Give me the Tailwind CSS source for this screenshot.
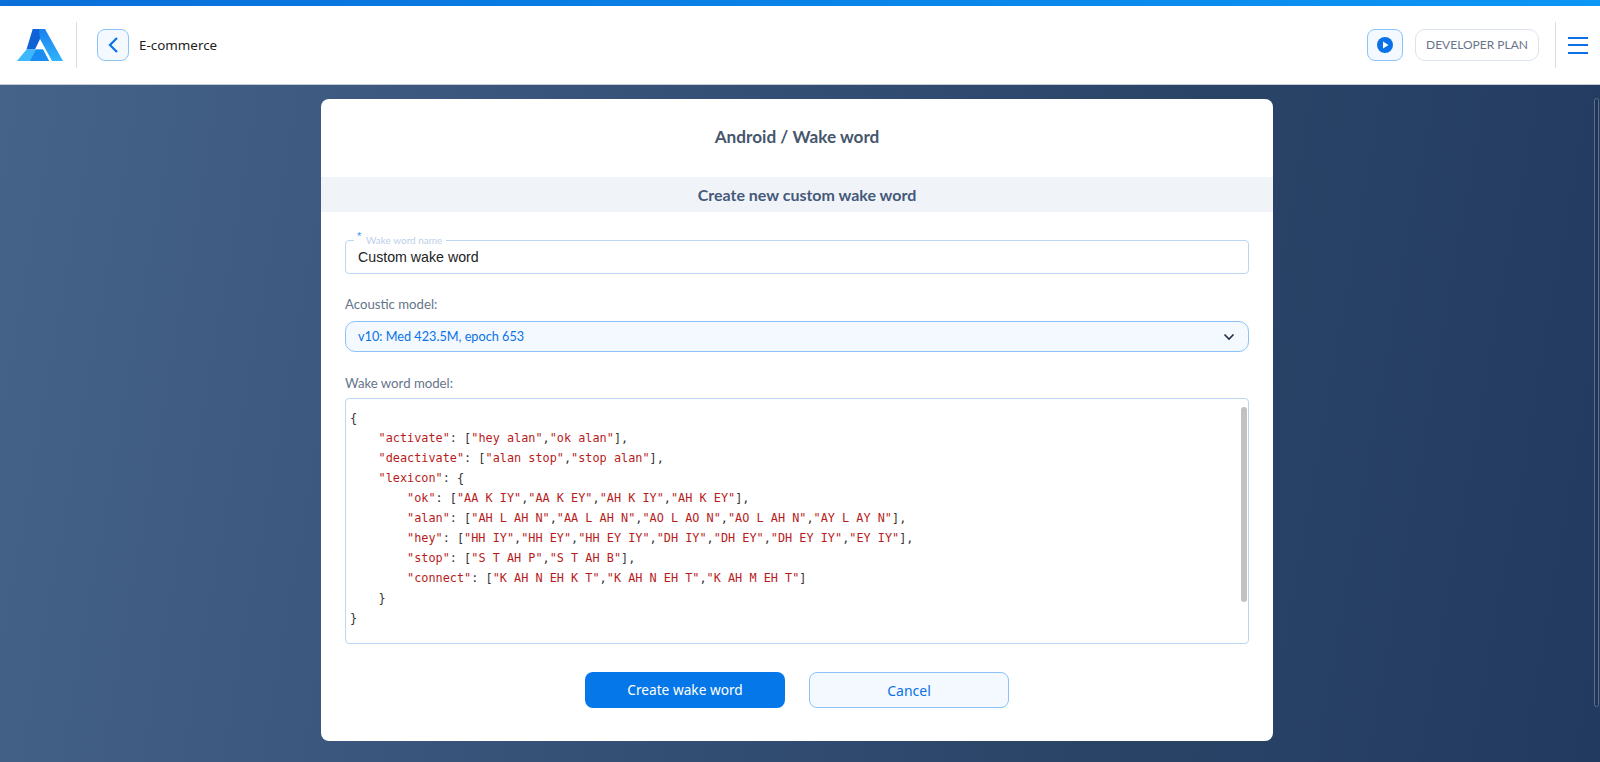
<!DOCTYPE html>
<html lang="en">
  <head>
    <meta charset="UTF-8" />
    <meta name="viewport" content="width=device-width, initial-scale=1.0" />
    <title>Android / Wake word</title>
    <script src="https://cdn.jsdelivr.net/npm/@tailwindcss/browser@4"></script>
  </head>
  <body class="h-[762px] overflow-hidden flex flex-col bg-[#2f4a72] font-['Lato',sans-serif]">
    <!-- Top bar -->
    <div class="h-[6px] bg-gradient-to-r from-[#0a6fd8] to-[#0c96f5]"></div>
    <header class="h-[79px] bg-white flex items-center justify-between border-b border-[#c5ccd6]">
      <div class="flex items-center">
        <div class="w-[77px] h-[46px] border-r border-[#d9dfe7] flex items-center pl-[17px]">
          <svg width="46" height="32" viewBox="0 0 46 32">
            <defs>
              <linearGradient id="a" x1="0" y1="0" x2="0" y2="1">
                <stop offset="0" stop-color="#1a7ff0" />
                <stop offset="1" stop-color="#2fb4fb" />
              </linearGradient>
            </defs>
            <path d="M15.7 0H28L46 32H35L23 10Z" fill="url(#a)" />
            <path d="M15.7 0H22L23 10 18 20.5H9.5Z" fill="#0f62d6" />
            <path d="M9.5 20.5H26L32 32H0Z" fill="#3db8fc" />
            <path d="M19 20.5H26L32 32H13Z" fill="#1a8df2" />
          </svg>
        </div>
        <button class="ml-[20px] w-[32px] h-[32px] rounded-[8px] border border-[#8cc4fa] bg-[#f4f9ff] flex items-center justify-center">
          <svg width="12" height="18" viewBox="0 0 12 18" fill="none" stroke="#0a72e6" stroke-width="2.2">
            <path d="M10 2 3 9l7 7" />
          </svg>
        </button>
        <span class="ml-[10px] text-[13.4px] text-[#222] font-['Noto_Sans',sans-serif]">E-commerce</span>
      </div>
      <div class="flex items-center">
        <button class="w-[36px] h-[32px] rounded-[8px] border border-[#8cc4fa] bg-[#f4f9ff] flex items-center justify-center">
          <svg width="16" height="16" viewBox="0 0 16 16">
            <circle cx="8" cy="8" r="8" fill="#0a72e6" />
            <path d="M6 4.5v7L11.5 8Z" fill="#fff" />
          </svg>
        </button>
        <div class="ml-[12px] w-[124px] h-[32px] rounded-[10px] border border-[#dde3ec] flex items-center justify-center text-[12px] text-[#68758a]">DEVELOPER PLAN</div>
        <div class="ml-[16px] w-[1px] h-[46px] bg-[#d9dfe7]"></div>
        <div class="ml-[12px] mr-[12px] w-[20px] flex flex-col gap-[5.5px]">
          <span class="h-[2px] bg-[#0a72e6]"></span>
          <span class="h-[2px] bg-[#0a72e6]"></span>
          <span class="h-[2px] bg-[#0a72e6]"></span>
        </div>
      </div>
    </header>

    <!-- Main -->
    <main class="relative flex-1 bg-[linear-gradient(100deg,#456289,#2a4468_70%,#233a60)] flex justify-center pr-[6px] pt-[14px]">
      <div class="w-[952px] h-[642px] bg-white rounded-[8px] flex flex-col">
        <h1 class="h-[76px] mb-[2px] flex items-center justify-center text-[17.2px] font-bold text-[#46566c]">Android / Wake word</h1>
        <h2 class="h-[35px] pl-[20px] bg-[#f0f4f9] flex items-center justify-center text-[16px] font-bold text-[#45597a]">Create new custom wake word</h2>

        <div class="px-[24px] flex flex-col">
          <!-- Name field -->
          <div class="relative mt-[28px] h-[34px] border border-[#bcd6f3] rounded-[4px] flex items-center px-[12px] pt-[1px] text-[14.2px] text-[#222] font-['Liberation_Sans',sans-serif]">
            Custom wake word
            <span class="absolute left-[8px] top-[-7px] bg-white pl-[12px] pr-[4px] text-[10px] leading-[12px] text-[#bdd0ea] font-['Lato',sans-serif]">Wake word name</span>
            <span class="absolute left-[11px] top-[-11px] text-[11px] leading-[12px] text-[#2e97f5]">*</span>
          </div>

          <label class="mt-[22px] text-[13.2px] leading-[16px] text-[#66758a]">Acoustic model:</label>
          <div class="mt-[9px] h-[31px] rounded-[10px] border border-[#8cc4fa] bg-[#f4f9ff] flex items-center justify-between pl-[12px] pr-[13px] text-[12.7px] text-[#0a72e6]">
            <span>v10: Med 423.5M, epoch 653</span>
            <svg width="12" height="8" viewBox="0 0 12 8" fill="none" stroke="#1f2d3d" stroke-width="1.6">
              <path d="M1.5 1.5 6 6l4.5-4.5" />
            </svg>
          </div>

          <label class="mt-[23px] text-[13.2px] leading-[16px] text-[#66758a]">Wake word model:</label>
          <div class="relative mt-[7px] h-[246px] rounded-[4px] border border-[#bcd6f3] pl-[4px] pt-[9px] font-['DejaVu_Sans_Mono',monospace] text-[11.85px] leading-[20px] text-[#333]">
            <div class="whitespace-pre">{</div>
            <div class="whitespace-pre">    <span class="text-[#b71c1c]">"activate"</span>: [<span class="text-[#b71c1c]">"hey alan"</span>,<span class="text-[#b71c1c]">"ok alan"</span>],</div>
            <div class="whitespace-pre">    <span class="text-[#b71c1c]">"deactivate"</span>: [<span class="text-[#b71c1c]">"alan stop"</span>,<span class="text-[#b71c1c]">"stop alan"</span>],</div>
            <div class="whitespace-pre">    <span class="text-[#b71c1c]">"lexicon"</span>: {</div>
            <div class="whitespace-pre">        <span class="text-[#b71c1c]">"ok"</span>: [<span class="text-[#b71c1c]">"AA K IY"</span>,<span class="text-[#b71c1c]">"AA K EY"</span>,<span class="text-[#b71c1c]">"AH K IY"</span>,<span class="text-[#b71c1c]">"AH K EY"</span>],</div>
            <div class="whitespace-pre">        <span class="text-[#b71c1c]">"alan"</span>: [<span class="text-[#b71c1c]">"AH L AH N"</span>,<span class="text-[#b71c1c]">"AA L AH N"</span>,<span class="text-[#b71c1c]">"AO L AO N"</span>,<span class="text-[#b71c1c]">"AO L AH N"</span>,<span class="text-[#b71c1c]">"AY L AY N"</span>],</div>
            <div class="whitespace-pre">        <span class="text-[#b71c1c]">"hey"</span>: [<span class="text-[#b71c1c]">"HH IY"</span>,<span class="text-[#b71c1c]">"HH EY"</span>,<span class="text-[#b71c1c]">"HH EY IY"</span>,<span class="text-[#b71c1c]">"DH IY"</span>,<span class="text-[#b71c1c]">"DH EY"</span>,<span class="text-[#b71c1c]">"DH EY IY"</span>,<span class="text-[#b71c1c]">"EY IY"</span>],</div>
            <div class="whitespace-pre">        <span class="text-[#b71c1c]">"stop"</span>: [<span class="text-[#b71c1c]">"S T AH P"</span>,<span class="text-[#b71c1c]">"S T AH B"</span>],</div>
            <div class="whitespace-pre">        <span class="text-[#b71c1c]">"connect"</span>: [<span class="text-[#b71c1c]">"K AH N EH K T"</span>,<span class="text-[#b71c1c]">"K AH N EH T"</span>,<span class="text-[#b71c1c]">"K AH M EH T"</span>]</div>
            <div class="whitespace-pre">    }</div>
            <div class="whitespace-pre">}</div>
            <div class="absolute right-[1px] top-[8px] w-[6px] h-[195px] rounded-[3px] bg-[#c1c1c1]"></div>
          </div>

          <div class="mt-[28px] flex justify-center gap-[24px]">
            <button class="w-[200px] h-[36px] rounded-[8px] bg-[#0677e8] text-white text-[13.7px] font-['Noto_Sans',sans-serif]">Create wake word</button>
            <button class="w-[200px] h-[36px] rounded-[8px] border border-[#8cc4fa] bg-[#f4f9ff] text-[#0a72e6] text-[14px] font-['Noto_Sans',sans-serif]">Cancel</button>
          </div>
        </div>
      </div>
      <!-- Page scrollbar -->
      <div class="absolute right-[1px] top-[13px] w-[5px] h-[609px] rounded-[3px] border border-[#5b6f8c] bg-[#1f3558]"></div>
    </main>
  </body>
</html>
